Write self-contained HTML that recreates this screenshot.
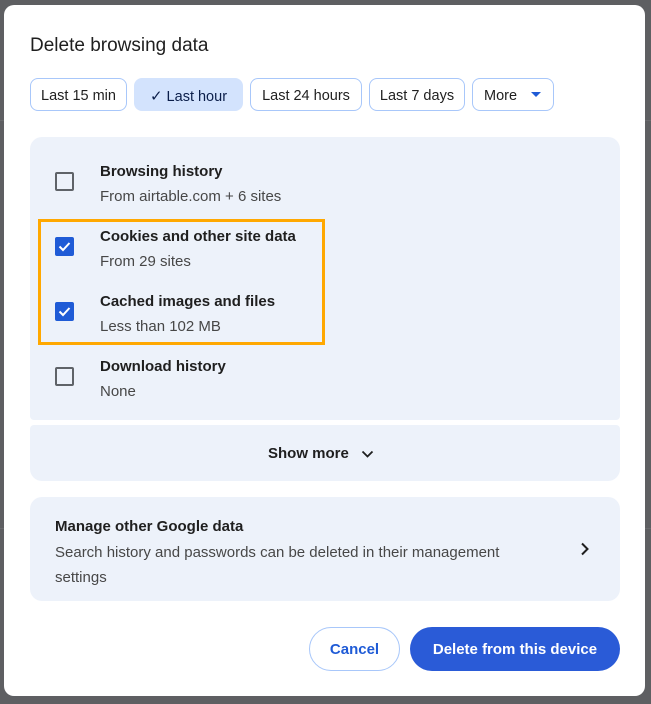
<!DOCTYPE html>
<html><head><style>
*{box-sizing:border-box;margin:0;padding:0}
body{width:651px;height:704px;background:#5e5f62;font-family:"Liberation Sans",sans-serif;position:relative;overflow:hidden;color:#1f1f1f}
.bgline{position:absolute;left:0;height:1px;background:#6a6b6e;width:651px}
.dlg{position:absolute;left:4px;top:5px;width:641px;height:691px;background:#fff;border-radius:10px}
.abs{position:absolute;white-space:nowrap}
h1{position:absolute;left:30px;top:35px;font-size:19px;font-weight:normal;color:#1f1f1f}
.chip{position:absolute;top:78px;height:33px;border:1px solid #a8c7fa;border-radius:8px;font-size:14.5px;line-height:35px;text-align:center;color:#1f1f1f;background:#fff;white-space:nowrap}
.sel{background:#d3e3fd;border-color:#d3e3fd;color:#0b1e4a}
.panel{position:absolute;background:#edf2fa}
.cb{position:absolute;left:55px;width:19px;height:19px;border:2px solid #5f6368;border-radius:2px}
.cb.on{background:#1f5bd6;border-color:#1f5bd6}
.t{position:absolute;left:100px;font-size:15px;font-weight:bold;color:#1f1f1f;white-space:nowrap}
.s{position:absolute;left:100px;font-size:15px;color:#474747;white-space:nowrap}
</style></head><body>
<div class="bgline" style="top:120px"></div>
<div class="bgline" style="top:528px"></div>
<div class="dlg"></div>
<h1>Delete browsing data</h1>
<div class="chip" style="left:30px;width:97px">Last 15 min</div>
<div class="chip sel" style="left:134px;width:109px"><span style="font-size:15px">✓</span> Last hour</div>
<div class="chip" style="left:250px;width:112px">Last 24 hours</div>
<div class="chip" style="left:369px;width:96px">Last 7 days</div>
<div class="chip" style="left:472px;width:82px;text-align:left;padding-left:11px">More <svg width="10" height="6" style="margin-left:10px;vertical-align:2px"><path d="M0 0L10 0L5 5Z" fill="#1f5bd6"/></svg></div>

<div class="panel" style="left:30px;top:137px;width:590px;height:283px;border-radius:12px 12px 4px 4px"></div>
<div class="panel" style="left:30px;top:425px;width:590px;height:56px;border-radius:4px 4px 12px 12px"></div>
<div class="panel" style="left:30px;top:497px;width:590px;height:104px;border-radius:12px"></div>

<div class="cb" style="top:172px"></div>
<div class="t" style="top:163px">Browsing history</div>
<div class="s" style="top:188px">From airtable.com + 6 sites</div>

<div class="abs" style="left:38px;top:219px;width:287px;height:126px;border:3px solid #ffa800"></div>
<div class="cb on" style="top:237px"><svg width="15" height="15" class="abs" style="left:0;top:0"><path d="M2.5 7.5L6 11L12.5 4" stroke="#fff" stroke-width="2" fill="none"/></svg></div>
<div class="t" style="top:228px">Cookies and other site data</div>
<div class="s" style="top:253px">From 29 sites</div>
<div class="cb on" style="top:302px"><svg width="15" height="15" class="abs" style="left:0;top:0"><path d="M2.5 7.5L6 11L12.5 4" stroke="#fff" stroke-width="2" fill="none"/></svg></div>
<div class="t" style="top:293px">Cached images and files</div>
<div class="s" style="top:318px">Less than 102 MB</div>

<div class="cb" style="top:367px"></div>
<div class="t" style="top:358px">Download history</div>
<div class="s" style="top:383px">None</div>

<div class="abs" style="left:268px;top:445px;font-size:15px;font-weight:bold;color:#1f1f1f">Show more</div>
<svg class="abs" style="left:361px;top:450px" width="13" height="9"><path d="M1.5 1.5L6.5 6.5L11.5 1.5" stroke="#1f1f1f" stroke-width="1.8" fill="none"/></svg>

<div class="abs" style="left:55px;top:518px;font-size:15px;font-weight:bold">Manage other Google data</div>
<div class="abs" style="left:55px;top:540px;width:500px;font-size:15px;line-height:25px;color:#474747;white-space:normal">Search history and passwords can be deleted in their management settings</div>
<svg class="abs" style="left:580px;top:542px" width="10" height="14"><path d="M2 1.5L7.5 7L2 12.5" stroke="#1f1f1f" stroke-width="2" fill="none"/></svg>

<div class="abs" style="left:309px;top:627px;width:91px;height:44px;border:1px solid #a8c7fa;border-radius:22px;color:#1f5bd6;font-size:15px;font-weight:bold;text-align:center;line-height:44px">Cancel</div>
<div class="abs" style="left:410px;top:627px;width:210px;height:44px;background:#2a5bd7;border-radius:22px;color:#fff;font-size:15px;font-weight:bold;text-align:center;line-height:46px">Delete from this device</div>
</body></html>
